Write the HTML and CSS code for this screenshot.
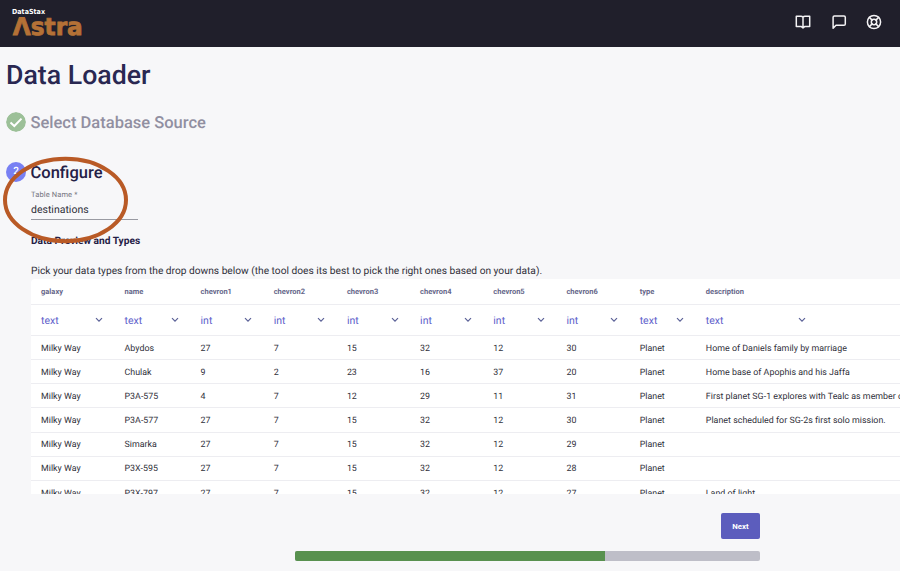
FILE: index.html
```html
<!DOCTYPE html>
<html lang="en">
<head>
<meta charset="utf-8">
<title>Data Loader</title>
<link rel="stylesheet" href="styles.css">
</head>
<body>
<header class="topbar">
  <div class="brand">
    <svg class="logo" width="76" height="32" viewBox="0 0 76 32" aria-label="DataStax Astra">
      <text class="logo-small" x="0" y="6" textLength="33" lengthAdjust="spacingAndGlyphs">DataStax</text>
      <text class="logo-big" x="0.800" y="26.500" textLength="70" lengthAdjust="spacingAndGlyphs">Λstra</text>
    </svg>
  </div>
  <nav class="tools">
    <svg width="18" height="18" viewBox="0 0 18 18"><path d="M9 4.2Q8.300 3.300 7 3.300H2.300V13.600H7.400L9 14.900L10.600 13.600H15.700V3.300H11Q9.700 3.300 9 4.200V14"/></svg>
    <svg width="18" height="18" viewBox="0 0 18 18"><path d="M3.100 15.300V4.300Q3.100 3 4.400 3H14Q15.300 3 15.300 4.300V11Q15.300 12.300 14 12.300H6Z"/></svg>
    <svg width="18" height="18" viewBox="0 0 18 18"><circle cx="9" cy="9" r="6.600"/><circle cx="9" cy="9" r="2.700"/><path d="M4.400 4.400L7.100 7.100M10.900 10.900L13.600 13.600M13.600 4.400L10.900 7.100M7.100 10.900L4.400 13.600"/></svg>
  </nav>
</header>
<main class="page">
  <h1>Data Loader</h1>
  <div class="step done">
    <svg class="badge" viewBox="0 0 20 20"><circle cx="10" cy="10" r="10"/><path d="M4.500 10.500L8.300 14L15.500 6.600"/></svg>
    <h2>Select Database Source</h2>
  </div>
  <div class="step active"><span class="badge num">2</span><h2>Configure</h2></div>
  <section class="config">
    <div class="field"><label>Table Name *</label><div class="value">destinations</div></div>
    <h3>Data Preview and Types</h3>
    <p>Pick your data types from the drop downs below (the tool does its best to pick the right ones based on your data).</p>
    <div class="table" id="table"></div>
  </section>
  <svg class="callout" width="130" height="90" viewBox="0 0 130 90"><ellipse cx="64.500" cy="45" rx="60.500" ry="41.200"/></svg>
</main>
<footer class="bottom">
  <div class="controls">
    <button>Next</button>
    <div class="progress"><div class="bar"></div></div>
  </div>
</footer>
<script src="script.js"></script>
</body>
</html>
```
FILE: styles.css
```css
* { box-sizing: border-box; }
body { margin: 0; width: 900px; height: 571px; overflow: hidden; display: flex; flex-direction: column; background: #f7f7f9; font-family: Roboto, sans-serif; color: #30303a; text-rendering: geometricPrecision; }
.topbar { flex: none; height: 47px; background: #201f2b; display: flex; justify-content: space-between; padding: 8px 17px 0 12px; }
.logo { display: block; overflow: visible; }
.logo-small { font: 700 7px "DejaVu Sans", sans-serif; fill: #fff; }
.logo-big { font: 700 24px "DejaVu Sans", sans-serif; fill: #b47136; stroke: #b47136; stroke-width: .8; }
.tools { display: flex; gap: 17.500px; padding-top: 4.500px; }
.tools svg { fill: none; stroke: #f4f3f5; stroke-width: 1.500; stroke-linejoin: round; stroke-linecap: round; }
.page { position: relative; height: 447px; flex: none; overflow: hidden; padding-left: 6px; }
h1, h2, h3, p { margin: 0; }
h1 { margin-top: 11px; height: 34px; font-size: 26.700px; line-height: 34px; font-weight: 500; color: #2a2852; }
.step { display: flex; align-items: center; gap: 4.500px; height: 24px; }
.step h2 { padding-top: 3px; font-size: 16.500px; line-height: 24px; font-weight: 500; color: #242046; }
.done { margin-top: 18px; }
.step.done h2 { color: #918fa1; }
.active { margin-top: 26px; }
.badge { flex: none; width: 20px; height: 20px; border-radius: 50%; }
.badge circle { fill: #9cc098; }
.badge path { fill: none; stroke: #fff; stroke-width: 2; }
.num { background: #7880f3; color: #fff; font-size: 10px; font-weight: 500; line-height: 20px; text-align: center; }
.config { margin-left: 25px; }
.field { width: 107px; height: 36px; padding-top: 5.500px; border-bottom: 1px solid #999aa2; }
.field label { display: block; font-size: 7.500px; line-height: 10px; letter-spacing: .12px; color: #74747e; }
.value { font-size: 10.500px; line-height: 14px; margin-top: 3.500px; }
h3 { font-size: 10.200px; line-height: 14px; margin-top: 15px; font-weight: 700; color: #242046; }
p { font-size: 10.200px; line-height: 14px; margin-top: 16px; white-space: nowrap; }
.table { width: 900px; background: #fff; border-radius: 4px 0 0 0; }
.row { display: grid; grid-template-columns: 83.500px 76px repeat(6, 73.200px) 66.200px 1fr; height: 24.170px; align-items: center; padding: 2px 0 0 10px; font-size: 8.850px; letter-spacing: .02px; border-bottom: 1px solid #ededf1; white-space: nowrap; }
.head { height: 26px; padding-top: 0; font-size: 7.500px; font-weight: 700; color: #66678a; }
.types { height: 31px; padding-top: 0; font-size: 10.500px; color: #5e61cb; }
.select { display: flex; align-items: center; justify-content: space-between; padding-right: 21.500px; }
.select svg { fill: none; stroke: #5b6197; stroke-width: 1.200; }
.select:last-child { width: 122px; }
.callout { position: absolute; left: 1px; top: 108px; }
.callout ellipse { fill: none; stroke: #b95a26; stroke-width: 4; }
.bottom { flex: none; height: 77px; display: flex; justify-content: center; background: #f7f7f9; }
.controls { width: 465px; margin-left: 155px; padding-top: 19px; display: flex; flex-direction: column; align-items: flex-end; }
button { width: 39px; height: 26px; padding: 0; border: 0; border-radius: 2px; background: #5c5dbd; color: #fff; font: 700 7.800px Roboto, sans-serif; }
.progress { width: 465px; height: 10px; margin-top: 12px; border-radius: 2px; overflow: hidden; background: #bebec8; }
.bar { width: 66.700%; height: 100%; background: #58914f; }
```
FILE: script.js
```js
const table = document.getElementById('table');
const arrow = '<svg width="8" height="6" viewBox="0 0 8 6"><path d="M1 1.200L4 4.200L7 1.200"/></svg>';
function addRow(cells, className = '') {
  const row = document.createElement('div');
  row.className = 'row ' + className;
  row.innerHTML = cells.map(c => className === 'types' ? `<div class="select"><span>${c}</span>${arrow}</div>` : `<div>${c}</div>`).join('');
  table.appendChild(row);
}
addRow(['galaxy','name','chevron1','chevron2','chevron3','chevron4','chevron5','chevron6','type','description'], 'head');
addRow(['text','text','int','int','int','int','int','int','text','text'], 'types');
[
  ['Abydos',27,7,15,32,12,30,'Home of Daniels family by marriage'],
  ['Chulak',9,2,23,16,37,20,'Home base of Apophis and his Jaffa'],
  ['P3A-575',4,7,12,29,11,31,'First planet SG-1 explores with Tealc as member of the team.'],
  ['P3A-577',27,7,15,32,12,30,'Planet scheduled for SG-2s first solo mission.'],
  ['Simarka',27,7,15,32,12,29,''],
  ['P3X-595',27,7,15,32,12,28,''],
  ['P3X-797',27,7,15,32,12,27,'Land of light']
].forEach(r => addRow(['Milky Way', ...r.slice(0, 7), 'Planet', r[7]]));
```
